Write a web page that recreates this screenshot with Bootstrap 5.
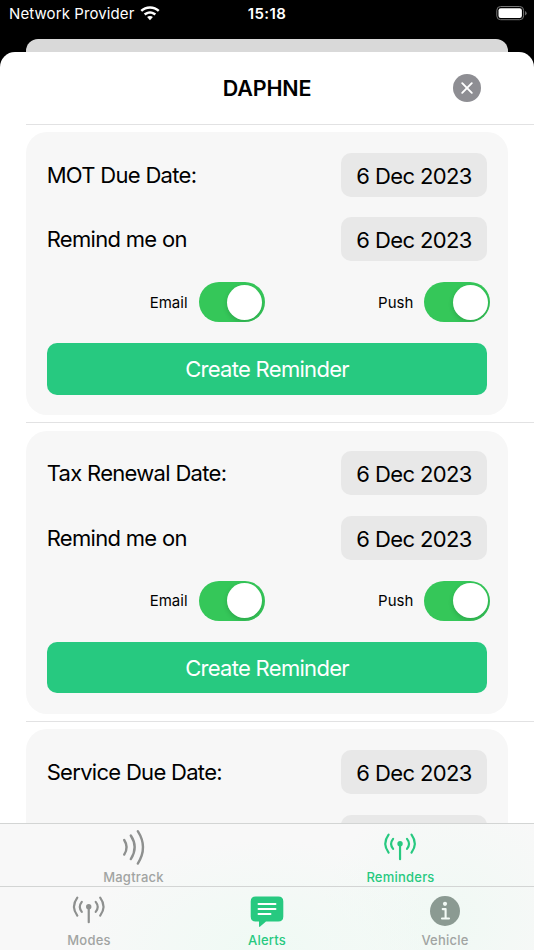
<!DOCTYPE html>
<html lang="en">
<head>
<meta charset="utf-8">
<meta name="viewport" content="width=device-width, initial-scale=1">
<title>Reminders</title>
<link href="https://cdn.jsdelivr.net/npm/bootstrap@5.3.0/dist/css/bootstrap.min.css" rel="stylesheet">
<style>
  body { font-family: Inter, "Liberation Sans", sans-serif; background: #000; color: #000; }
  .status-bar { height: 39px; font-size: 15px; line-height: 28px; letter-spacing: .1px; }
  .provider { padding-left: 9px; }
  .wifi { margin: 5.5px 0 0 6px; }
  .clock { letter-spacing: .4px; }
  .battery { margin: 6px 6px 0 0; }
  .sheet-behind { height: 13px; margin: 0 26px; background: #d9d9d9; border-radius: 12px 12px 0 0; }
  .sheet { min-height: 0; border-radius: 15px 15px 0 0; }
  .sheet-head { height: 72px; }
  .sheet-title { font-size: 21.5px; font-weight: 600; letter-spacing: -.15px; line-height: 72px; }
  .close-btn { width: 28px; height: 28px; margin-right: 53px; }
  .reminder { flex: none; height: 298.7px; margin-left: 26px; padding: 7.3px 26px 0 0; border-top: 1px solid #e2e2e3; }
  .reminder:first-of-type { height: 298.4px; padding-top: 7px; }
  .panel { height: 283px; padding: 20.7px 20.7px 0 20.7px; background: #f7f7f7; border-radius: 21px; }
  .field { height: 44px; margin-bottom: 20.8px; font-size: 22px; line-height: 46px; letter-spacing: -.7px; }
  .date-pill { width: 146.5px; height: 44px; background: #e8e8e8; border-radius: 10px; letter-spacing: -.62px; }
  .switches { height: 40px; margin-right: -3px; font-size: 15px; line-height: 41px; }
  .push-label { margin-left: 113.5px; }
  .toggle { width: 66px; height: 40px; padding: 2.5px; margin-left: 11px; overflow: hidden; background: #35c759; border-radius: 20px; }
  .knob { width: 35px; height: 35px; box-shadow: 0 2px 5px rgba(0,0,0,.16); }
  .btn-create { height: 51.5px; margin-top: 21px; padding: 0; font-size: 22px; line-height: 52px; letter-spacing: -.7px; color: #fff; background: #27c980; border: 0; border-radius: 10px; }
  .btn-create:hover { color: #fff; background: #22b874; }
  .tabs { background: radial-gradient(ellipse 190px 110px at 265px 127px, #effaf4, transparent), radial-gradient(ellipse 130px 130px at 450px 100px, #f0f9f4, transparent), #f8f8f8; }
  .tab-row { height: 63px; border-top: 1px solid #d3d5d4; }
  .tab-row-main { height: 64px; }
  .tab-row a { font-size: 13px; font-weight: 500; letter-spacing: .22px; line-height: 16px; color: #a1a4a2; text-decoration: none; }
  .tab-row a.active { color: #27c980; }
  .tab-row svg { display: block; height: 46px; width: 48px; margin-top: -.5px; margin-bottom: -1px; }
</style>
<script src="https://cdn.jsdelivr.net/npm/bootstrap@5.3.0/dist/js/bootstrap.bundle.min.js"></script>
</head>
<body class="vh-100 overflow-hidden d-flex flex-column">

<svg class="d-none">
  <symbol id="antenna" viewBox="0 0 48 46">
    <g fill="none" stroke="currentColor" stroke-linecap="round" stroke-width="2.200">
      <path d="M12.300 15.200q-6.600 9 0 18M35.200 15.200q6.600 9 0 18M16.800 19.400q-4 5 0 10M30.700 19.400q4 5 0 10M23.750 24.500v15.200"/>
    </g>
    <circle cx="23.750" cy="24.300" r="2.700" fill="currentColor"/>
  </symbol>
</svg>

<header class="status-bar row g-0 flex-shrink-0 text-white">
  <div class="provider col-4 d-flex">
    <span>Network Provider</span>
    <svg class="wifi" width="20" height="15" viewBox="0 0 20 15" fill="#fff">
      <path d="M10 .2c3.700 0 7.100 1.400 9.600 3.800l-1.700 1.800C15.800 3.800 13 2.700 10 2.700S4.200 3.800 2.100 5.800L.4 4C2.900 1.600 6.300.2 10 .2z"/>
      <path d="M10 5.200c2.300 0 4.500.9 6.200 2.400l-1.800 1.800C13.200 8.300 11.700 7.700 10 7.700s-3.200.6-4.400 1.700L3.800 7.600C5.500 6.100 7.700 5.200 10 5.200z"/>
      <path d="M10 10c1.100 0 2.100.4 2.900 1.100L10 14.300l-2.900-3.200C7.900 10.400 8.900 10 10 10z"/>
    </svg>
  </div>
  <div class="clock col-4 text-center fw-semibold">15:18</div>
  <div class="col-4 text-end">
    <svg class="battery d-inline-block align-top" width="32" height="15" viewBox="0 0 32 15">
      <rect x=".8" y=".5" width="26.800" height="13.200" rx="3.800" fill="none" stroke="#777" stroke-width="1"/>
      <rect x="2.500" y="2.200" width="23.400" height="9.800" rx="2.200" fill="#fff"/>
      <path d="M29.100 5v4.500q1.500-.7 1.500-2.250T29.100 5z" fill="#777"/>
    </svg>
  </div>
</header>
<div class="sheet-behind flex-shrink-0"></div>

<main class="sheet bg-white flex-grow-1 d-flex flex-column overflow-hidden">
  <div class="sheet-head row g-0 flex-shrink-0 align-items-center">
    <div class="col-3"></div>
    <h1 class="sheet-title col-6 text-center m-0">DAPHNE</h1>
    <div class="col-3 d-flex justify-content-end">
      <svg class="close-btn" viewBox="0 0 28 28" role="img" aria-label="Close">
        <circle cx="14" cy="14" r="14" fill="#8e8e93"/>
        <path d="M9.200 9.200l9.600 9.600M18.800 9.200l-9.600 9.600" stroke="#fff" stroke-width="1.900" stroke-linecap="round"/>
      </svg>
    </div>
  </div>

  <section class="reminder">
    <div class="panel">
      <div class="field d-flex align-items-center justify-content-between"><span>MOT Due Date:</span><span class="date-pill text-center">6 Dec 2023</span></div>
      <div class="field d-flex align-items-center justify-content-between"><span>Remind me on</span><span class="date-pill text-center">6 Dec 2023</span></div>
      <div class="switches d-flex align-items-center justify-content-end">
        <span>Email</span><span class="toggle d-flex justify-content-end"><span class="knob bg-white rounded-circle"></span></span>
        <span class="push-label">Push</span><span class="toggle d-flex justify-content-end"><span class="knob bg-white rounded-circle"></span></span>
      </div>
      <button class="btn btn-create d-block w-100">Create Reminder</button>
    </div>
  </section>

  <section class="reminder">
    <div class="panel">
      <div class="field d-flex align-items-center justify-content-between"><span>Tax Renewal Date:</span><span class="date-pill text-center">6 Dec 2023</span></div>
      <div class="field d-flex align-items-center justify-content-between"><span>Remind me on</span><span class="date-pill text-center">6 Dec 2023</span></div>
      <div class="switches d-flex align-items-center justify-content-end">
        <span>Email</span><span class="toggle d-flex justify-content-end"><span class="knob bg-white rounded-circle"></span></span>
        <span class="push-label">Push</span><span class="toggle d-flex justify-content-end"><span class="knob bg-white rounded-circle"></span></span>
      </div>
      <button class="btn btn-create d-block w-100">Create Reminder</button>
    </div>
  </section>

  <section class="reminder">
    <div class="panel">
      <div class="field d-flex align-items-center justify-content-between"><span>Service Due Date:</span><span class="date-pill text-center">6 Dec 2023</span></div>
      <div class="field d-flex align-items-center justify-content-end"><span class="date-pill"></span></div>
    </div>
  </section>
</main>

<footer class="tabs flex-shrink-0">
  <nav class="tab-row row g-0">
    <a href="#" class="col-6 d-flex flex-column align-items-center">
      <svg viewBox="0 0 48 46" fill="none" stroke="#8e908f" stroke-width="2.400" stroke-linecap="round"><path d="M14.200 16q4.800 7.300 0 14.600M20.800 11.500q7.800 11.800 0 23.600M27.800 7.200q10.400 16.200 0 32.400"/></svg>
      Magtrack
    </a>
    <a href="#" class="active col-6 d-flex flex-column align-items-center">
      <svg><use href="#antenna" x="-.7" y="-4.500" width="48" height="46"/></svg>
      Reminders
    </a>
  </nav>
  <nav class="tab-row tab-row-main row g-0">
    <a href="#" class="col-4 d-flex flex-column align-items-center">
      <svg color="#8e908f"><use href="#antenna" y="-4.500" width="48" height="46"/></svg>
      Modes
    </a>
    <a href="#" class="active col-4 d-flex flex-column align-items-center">
      <svg viewBox="0 0 48 46"><path d="M12.700 9.500h22.600q5 0 5 5v15q0 5-5 5H23l-5.800 5q-1.200 1-1.200-.6v-4.400h-3.300q-5 0-5-5v-15q0-5 5-5z" fill="#27c980"/><path d="M15.500 17h17M15.500 22h17M15.500 27h12" stroke="#fff" stroke-width="1.900" stroke-linecap="round"/></svg>
      Alerts
    </a>
    <a href="#" class="col-4 d-flex flex-column align-items-center">
      <svg viewBox="0 0 48 46"><circle cx="24" cy="24" r="15" fill="#8b9a92"/><circle cx="24" cy="16.800" r="2.100" fill="#f3faf6"/><path d="M21.700 22.100h2.900v9M21 31.500h7" fill="none" stroke="#f3faf6" stroke-width="2.100" stroke-linecap="round" stroke-linejoin="round"/></svg>
      Vehicle
    </a>
  </nav>
</footer>
</body>
</html>
